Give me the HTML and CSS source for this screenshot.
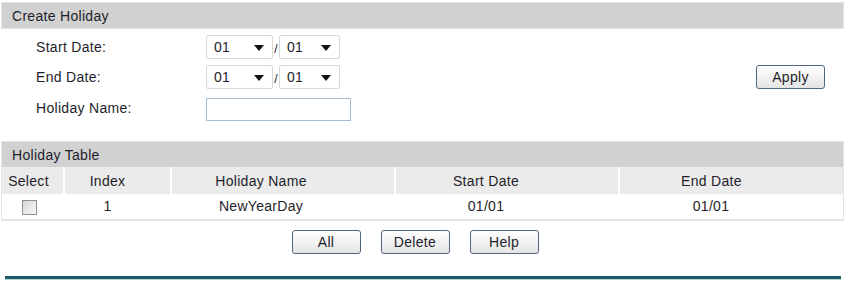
FILE: index.html
```html
<html>
<head>
    <title>Holiday Config</title>
    <link rel="stylesheet" href="styles.css">
</head>
<body>
<div class="page">
    <div class="bar top-bar">Create Holiday</div>
    <div class="create">
        <div class="form">
            <label>Start Date:</label>
            <div class="dates">
                <span class="sel"><select><option>01</option></select></span>
                <span class="slash">/</span>
                <span class="sel"><select><option>01</option></select></span>
            </div>
            <label>End Date:</label>
            <div class="dates">
                <span class="sel"><select><option>01</option></select></span>
                <span class="slash">/</span>
                <span class="sel"><select><option>01</option></select></span>
            </div>
            <label>Holiday Name:</label>
            <div><input type="text" class="name"></div>
        </div>
        <button class="btn apply">Apply</button>
    </div>

    <div class="panel">
        <div class="bar">Holiday Table</div>
        <table class="list">
            <tr class="head">
                <th class="c-sel">Select</th>
                <th class="c-idx">Index</th>
                <th class="c-name">Holiday Name</th>
                <th class="c-date">Start Date</th>
                <th class="c-end">End Date</th>
            </tr>
            <tr>
                <td class="c-sel"><span class="check"></span></td>
                <td class="c-idx">1</td>
                <td class="c-name">NewYearDay</td>
                <td class="c-date">01/01</td>
                <td class="c-end">01/01</td>
            </tr>
        </table>
    </div>

    <div class="actions">
        <button class="btn">All</button>
        <button class="btn">Delete</button>
        <button class="btn">Help</button>
    </div>

    <div class="rule"></div>
</div>
</body>
</html>
```

FILE: styles.css
```css
body {
    margin: 0px;
    font-family: "Liberation Sans", Arial, sans-serif;
    font-size: 14px;
    letter-spacing: 0.3px;
    color: #1e1e2a;
    background-color: #ffffff;
}

.page {
    width: 845px;
    padding-top: 2px;
}

.bar {
    height: 25px;
    line-height: 26px;
    padding-left: 10px;
    background-color: #d1d1d1;
    border-top: 1px solid #e4e4e4;
}

.top-bar {
    margin: 0 1px;
    border: 1px solid #e4e4e4;
}

.create {
    display: flex;
    align-items: center;
    justify-content: space-between;
    padding: 6px 20px 0 36px;
}

.form {
    display: grid;
    grid-template-columns: 170px auto;
    row-gap: 6px;
    align-items: center;
}

.dates {
    display: flex;
    align-items: center;
}

.sel {
    position: relative;
    display: inline-block;
}

.sel select {
    -webkit-appearance: none;
    appearance: none;
    width: 67px;
    height: 24px;
    padding: 0 0 0 7px;
    font-family: "Liberation Sans", Arial, sans-serif;
    font-size: 14px;
    letter-spacing: 0.3px;
    color: #1e1e2a;
    background: #ffffff;
    border: 1px solid #d8d8d8;
    border-radius: 2px;
}

.dates .sel + .slash + .sel select {
    width: 61px;
}

.sel::after {
    content: "";
    position: absolute;
    right: 9px;
    top: 10px;
    border-left: 5px solid transparent;
    border-right: 5px solid transparent;
    border-top: 6px solid #111111;
}

.slash {
    width: 6px;
    text-align: center;
    font-size: 12px;
    padding-top: 3px;
}

.name {
    width: 145px;
    height: 23px;
    margin-top: 3px;
    border: 1px solid #a9bdd1;
    padding: 0;
}

.btn {
    width: 69px;
    height: 24px;
    padding: 0;
    font-family: "Liberation Sans", Arial, sans-serif;
    font-size: 14px;
    letter-spacing: 0.3px;
    color: #1e1e2a;
    border: 1px solid #52667e;
    border-radius: 3px;
    background: linear-gradient(#ffffff, #f2f2f2 50%, #e4e4e4);
}

.apply {
    margin-top: -3px;
}

.panel {
    margin: 20px 1px 0 1px;
    border: 1px solid #e4e4e4;
    border-top: none;
}

.list {
    width: 100%;
    border-collapse: collapse;
    font-size: 14px;
    letter-spacing: 0.3px;
    color: #1e1e2a;
}

.list th {
    height: 27px;
    font-weight: normal;
    background-color: #ebebeb;
    border-left: 2px solid #ffffff;
    padding: 0;
}

.list th:first-child {
    border-left: none;
}

.list td {
    height: 25px;
    text-align: center;
    padding: 0;
    border-bottom: 1px solid #e4e4e4;
}

.c-sel {
    width: 53px;
    padding-right: 8px !important;
}

.c-idx {
    width: 85px;
    padding-right: 20px !important;
}

.c-name {
    width: 178px;
    padding-right: 44px !important;
}

.c-date {
    width: 180px;
    padding-right: 42px !important;
}

.c-end {
    padding-right: 40px !important;
}

.check {
    display: inline-block;
    width: 13px;
    height: 13px;
    margin-top: 3px;
    border: 1px solid #8f8f8f;
    background: linear-gradient(135deg, #d8d8d8, #f8f8f8);
}

.actions {
    display: flex;
    justify-content: center;
    gap: 20px;
    padding: 9px 0 0 0;
    margin-left: -15px;
}

.rule {
    margin: 22px 4px 0 5px;
    height: 3px;
    background-color: #1b5c68;
    border-bottom: 1px solid #bcd4d8;
}
```
